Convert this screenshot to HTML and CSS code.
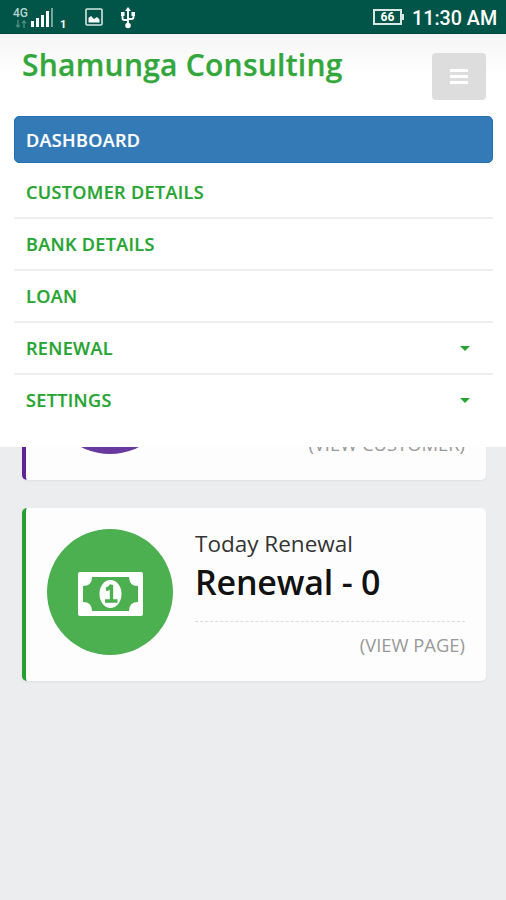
FILE: index.html
```html
<!DOCTYPE html>
<html lang="en">
<head>
<meta charset="utf-8">
<title>Shamunga Consulting</title>
<link rel="stylesheet" href="styles.css">
</head>
<body>
<div class="status">
  <div class="network">
    <span class="network-type">4G</span>
    <svg width="12" height="8" viewBox="0 0 12 8" fill="none" stroke="#4c8c80" stroke-width="1.4"><path d="M3 0v7M1 5l2 2 2-2M9 8V1M7 3l2-2 2 2"/></svg>
  </div>
  <svg class="signal" width="24" height="20" viewBox="0 0 24 20" fill="#fff"><path d="M1 13h3v6H1zM6 10h3v9H6zM11 7h3v12h-3zM16 3h3v16h-3z"/><path fill="#71a69c" d="M21 0h2v19h-2z"/></svg>
  <span class="sim">1</span>
  <svg class="gallery" width="18" height="18" viewBox="0 0 18 18"><rect x="1" y="1" width="16" height="16" rx="1" fill="none" stroke="#d5e5e2" stroke-width="1.6"/><path fill="#fff" d="M3.500 14.500V10L6 8l3 3 3-2 2.500 2.500v3z"/></svg>
  <svg class="usb" width="16" height="22" viewBox="0 0 16 22" fill="none" stroke="#fff" stroke-width="1.9"><path d="M8 3v15M2.500 7v4q0 2 2 2H8M13.500 6v4q0 2-2 2H8"/><path fill="#fff" stroke="none" d="M8 0l3 4H5zM1 5h3.500v4H1zM11.500 5H15v4h-3.500z"/><circle cx="8" cy="18.500" r="2.800" fill="#fff" stroke="none"/></svg>
  <div class="battery">66</div>
  <span class="clock">11:30 AM</span>
</div>
<header class="header">
  <div class="brand-row">
    <h1 class="brand">Shamunga Consulting</h1>
    <div class="toggle"><i></i><i></i><i></i></div>
  </div>
  <nav class="menu">
    <a class="item active"><span>DASHBOARD</span></a>
    <a class="item"><span>CUSTOMER DETAILS</span></a>
    <a class="item"><span>BANK DETAILS</span></a>
    <a class="item"><span>LOAN</span></a>
    <a class="item"><span>RENEWAL</span><b class="caret"></b></a>
    <a class="item"><span>SETTINGS</span><b class="caret"></b></a>
  </nav>
</header>
<main class="content">
  <section class="card customers">
    <div class="disc"></div>
    <div class="info"><p class="link">(VIEW CUSTOMER)</p></div>
  </section>
  <section class="card renewals">
    <div class="disc">
      <svg width="65" height="44" viewBox="0 0 65 44"><rect width="65" height="44" rx="2" fill="#fff"/><path fill="#4caf50" d="M14 5h37q0 9 9 9v16q-9 0-9 9H14q0-9-9-9V14q9 0 9-9z"/><ellipse cx="32.500" cy="22" rx="11" ry="14" fill="#fff"/><path d="M28 17.500q4-1 5.500-4.500v16M27 29h12.500" fill="none" stroke="#4caf50" stroke-width="3.400"/></svg>
    </div>
    <div class="info">
      <h3 class="label">Today Renewal</h3>
      <h2 class="value">Renewal - 0</h2>
      <p class="link">(VIEW PAGE)</p>
    </div>
  </section>
</main>
</body>
</html>
```
FILE: styles.css
```css
* { box-sizing: border-box; }
body {
  margin: 0;
  width: 506px;
  height: 900px;
  display: flex;
  flex-direction: column;
  overflow: hidden;
  background: #ebedef;
  font-family: "Open Sans", sans-serif;
}
h1, h2, h3, p { margin: 0; }
svg { display: block; flex: none; }

.status {
  height: 34px;
  flex: none;
  display: flex;
  align-items: flex-start;
  padding-left: 13px;
  background: #005548;
  border-bottom: 1px solid #00473b;
  color: #fff;
  font-family: Roboto, sans-serif;
}
.network { width: 17px; padding-top: 7px; }
.network svg { margin: 1px 0 0 2px; }
.network-type { display: block; font-size: 12px; line-height: 12px; color: #b7d3ce; font-weight: 500; }
.signal { margin-top: 8px; }
.sim { margin: 18px 0 0 6px; width: 8px; font-size: 11px; line-height: 14px; font-weight: 700; }
.gallery { margin: 8px 0 0 17px; }
.usb { margin: 7px 0 0 17px; }
.battery {
  position: relative;
  width: 29px;
  height: 16px;
  margin: 9px 0 0 237px;
  border: 2px solid #d8e7e4;
  font-size: 12px;
  line-height: 13px;
  font-weight: 700;
  text-align: center;
}
.battery::after {
  content: "";
  position: absolute;
  right: -4px;
  top: 3px;
  width: 2px;
  height: 6px;
  background: #d8e7e4;
}
.clock { margin: 7px 0 0 10px; font-size: 19.7px; line-height: 24px; font-weight: 500; white-space: nowrap; }

.header {
  height: 413px;
  flex: none;
  padding: 18px 13px 0 14px;
  background: linear-gradient(#f5f5f5, #fff 42px);
}
.brand-row { display: flex; justify-content: space-between; height: 64px; padding: 0 7px 0 8px; }
.brand { color: #34a73c; font-size: 30px; line-height: 26px; font-weight: 600; letter-spacing: 0.25px; -webkit-text-stroke: 0.25px #34a73c; white-space: nowrap; }
.toggle {
  width: 54px;
  height: 47px;
  margin-top: 1px;
  border-radius: 4px;
  background: #ddd;
  display: flex;
  flex-direction: column;
  align-items: center;
  justify-content: center;
  gap: 3px;
}
.toggle i { width: 18px; height: 3px; background: #fff; }
.item {
  display: flex;
  align-items: center;
  justify-content: space-between;
  height: 52px;
  padding: 0 23px 0 12px;
  border-bottom: 2px solid #eee;
  color: #27a431;
  font-size: 18px;
  letter-spacing: 0.35px;
  font-weight: 600;
  -webkit-text-stroke: 0.2px #27a431;
}
.item:last-child { border-bottom-color: transparent; }
.item.active { height: 47px; margin-bottom: 4px; border: 1px solid #2470b4; border-radius: 5px; padding: 0 0 0 11px; background: #337ab7; color: #fff; -webkit-text-stroke-color: #fff; }
.caret { border: 5.5px solid transparent; border-top-color: #27a431; border-bottom: 0; }

.content { flex: 1; overflow: hidden; padding: 0 20px 0 22px; }
.card {
  display: flex;
  height: 173px;
  padding: 21px 21px 0;
  border-left: 4px solid #28a031;
  border-radius: 5px;
  background: #fdfdfd;
  box-shadow: 0 1px 2px #dde0e3;
}
.customers { margin: -140px 0 28px; border-left-color: #5f2595; }
.disc {
  width: 126px;
  height: 126px;
  flex: none;
  border-radius: 50%;
  display: flex;
  align-items: center;
  justify-content: center;
  background: #4caf50;
}
.renewals .disc svg { position: relative; top: 2px; }
.customers .disc { background: #68399f; }
.info { flex: 1; display: flex; flex-direction: column; margin-left: 22px; }
.label { margin-top: -1px; font-size: 22.5px; line-height: 32px; font-weight: 400; color: #333; white-space: nowrap; }
.value { font-size: 34px; line-height: 44px; font-weight: 600; letter-spacing: -0.2px; color: #111; white-space: nowrap; }
.link { margin-top: auto; height: 56px; padding-top: 11px; border-top: 1px dashed #ddd; text-align: right; font-size: 18.4px; line-height: 24px; color: #999; margin-bottom: 4px; }
```
